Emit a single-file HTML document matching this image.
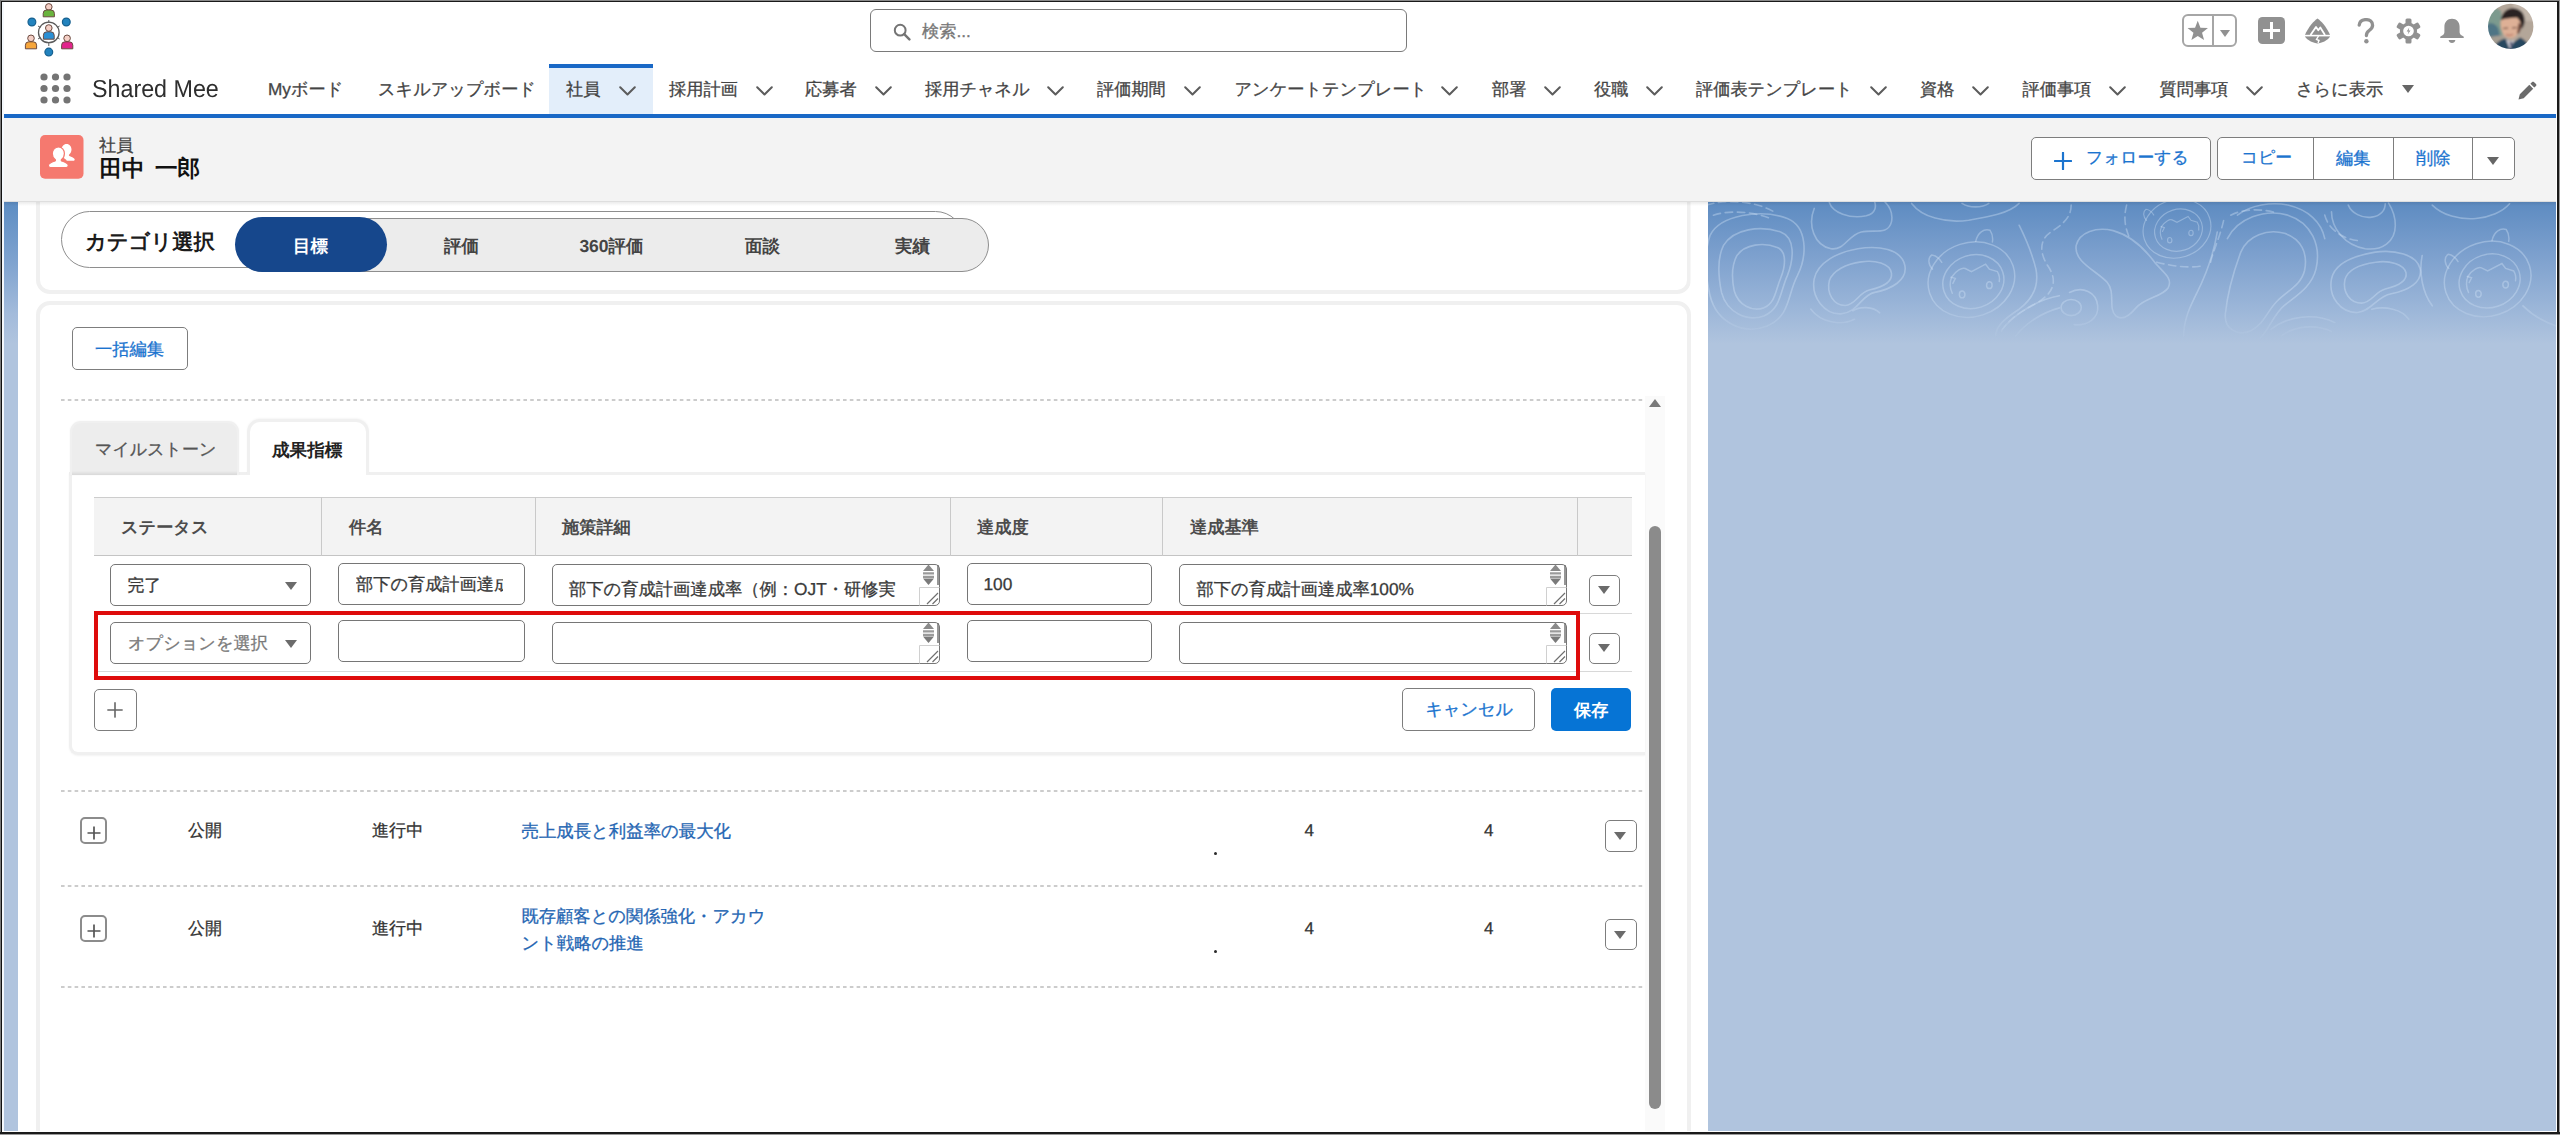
<!DOCTYPE html>
<html lang="ja">
<head>
<meta charset="utf-8">
<title>田中 一郎 | 社員</title>
<style>
*{box-sizing:border-box;margin:0;padding:0}
html,body{width:2560px;height:1135px;overflow:hidden;background:#fff}
body{font-family:"Liberation Sans",sans-serif;position:relative;color:#444;font-size:17.2px;text-rendering:geometricPrecision}
.a{position:absolute}
.t{position:absolute;white-space:nowrap;line-height:24px;height:24px;font-size:17.2px;color:#444;-webkit-text-stroke:.3px currentColor}
.b{font-weight:bold;-webkit-text-stroke:0}
.blue{color:#1b74cf}
.link{color:#2566b3}
.btn{position:absolute;background:#fff;border:1px solid #7d7d7d;border-radius:5px}
.inp{position:absolute;background:#fff;border:1px solid #767676;border-radius:5px}
.chev{position:absolute;width:17px;height:10px;top:85.5px}
.dash{position:absolute;height:2px;left:61px;width:1583px;background:repeating-linear-gradient(90deg,#c9c9c9 0,#c9c9c9 3.6px,rgba(255,255,255,0) 3.6px,rgba(255,255,255,0) 6.8px)}
.vline{position:absolute;width:1px;background:#c9c9c9}
.hline{position:absolute;height:1px;background:#d8d8d8}
.caret{position:absolute;width:0;height:0;border-left:6.5px solid transparent;border-right:6.5px solid transparent;border-top:8px solid #6b6b6b}
</style>
</head>
<body>

<!-- ===== GLOBAL HEADER ===== -->
<div class="a" id="hdr" style="left:0;top:0;width:2560px;height:114px;background:#fff">
<!-- app logo -->
<svg class="a" style="left:24px;top:2px" width="52" height="56" viewBox="24 2 52 56">
  <g stroke="#5a5a5a" stroke-width="1" fill="none">
    <circle cx="48.8" cy="32.4" r="10.3" stroke-width="1.3"/>
    <path d="M48.8 20v3M48.8 42v4M38 26l2.4 1.5M59.6 26l-2.4 1.5M38 39l2.4-1.5M59.6 39l-2.4-1.5"/>
  </g>
  <g stroke="#17608f" stroke-width="1.2" fill="#2283be">
    <circle cx="31.9" cy="22" r="3.9"/><circle cx="66.3" cy="22" r="3.9"/><circle cx="48.8" cy="52.1" r="3.9"/>
  </g>
  <g stroke="#6b4a40" stroke-width="1">
    <circle cx="48.8" cy="6.9" r="3.3" fill="#f4cfc6"/>
    <path d="M43.2 16.8v-3.4q0-3.4 3.4-3.4h4.4q3.4 0 3.4 3.4v3.4z" fill="#6ab43e"/>
    <circle cx="48.8" cy="28" r="3.3" fill="#f4cfc6"/>
    <path d="M43.4 39.2v-4q0-3.4 3.4-3.4h4q3.4 0 3.4 3.4v4z" fill="#2a8fd4"/>
    <circle cx="31" cy="38.3" r="3.3" fill="#f4cfc6"/>
    <path d="M25.4 48.8v-3.6q0-3.4 3.4-3.4h4.4q3.4 0 3.4 3.4v3.6z" fill="#f6a63c"/>
    <circle cx="67.1" cy="38.3" r="3.3" fill="#f4cfc6"/>
    <path d="M61.6 48.8v-3.6q0-3.4 3.4-3.4h4.4q3.4 0 3.4 3.4v3.6z" fill="#e2248c"/>
  </g>
</svg>
<!-- search -->
<div class="a" style="left:870px;top:9px;width:537px;height:43px;border:1px solid #7a7a7a;border-radius:6px;background:#fff"></div>
<svg class="a" style="left:893px;top:23px" width="18" height="18" viewBox="0 0 18 18"><circle cx="7.2" cy="7.2" r="5.4" fill="none" stroke="#747474" stroke-width="2"/><path d="M11.2 11.2l5.2 5.2" stroke="#747474" stroke-width="2.4" stroke-linecap="round"/></svg>
<div class="t" style="left:922px;top:19px;color:#777">検索...</div>
<!-- favorites -->
<div class="a" style="left:2182px;top:14px;width:55px;height:33px;border:2px solid #a6a6a6;border-radius:6px;background:#fff"></div>
<div class="a" style="left:2212px;top:15px;width:2px;height:31px;background:#a6a6a6"></div>
<svg class="a" style="left:2186.500px;top:20px" width="21.500" height="21.500" viewBox="0 0 20 20"><path d="M10 0.6l2.5 6.6 7 .3-5.5 4.4 1.9 6.8L10 14.8l-5.9 3.9L6 11.9.5 7.5l7-.3z" fill="#919191"/></svg>
<div class="caret" style="left:2219.5px;top:29.5px;border-left-width:5.5px;border-right-width:5.5px;border-top:7.5px solid #919191"></div>
<!-- plus box -->
<svg class="a" style="left:2258px;top:17px" width="27" height="27" viewBox="0 0 27 27"><rect x="0" y="0" width="27" height="27" rx="4.5" fill="#919191"/><path d="M13.5 5v17M5 13.5h17" stroke="#fff" stroke-width="3"/></svg>
<!-- trailhead -->
<svg class="a" style="left:2304px;top:18px" width="27" height="26" viewBox="0 0 27 26"><path d="M13.5 0.5C17 3 22.5 8.5 26.3 17.5c-.6 3.3-6 7-12.800 8C7 24.500 1.300 20.800.7 17.500 4.500 8.500 10 3 13.500.5z" fill="#919191"/><path d="M0 17.600h27" stroke="#fff" stroke-width="1.6"/><path d="M6.500 17l5.500-8 2.300 3.200 2-2.700L21 17" fill="none" stroke="#fff" stroke-width="1.800" stroke-linejoin="round"/><path d="M14.500 18l-2 3.500 2.500 1-1 2.500" fill="none" stroke="#fff" stroke-width="1.400"/></svg>
<!-- help -->
<svg class="a" style="left:2357px;top:18px" width="18" height="26" viewBox="0 0 18 26"><path d="M2.200 7.200C2.600 3.400 5.400 1.600 9 1.600c3.800 0 6.600 2.200 6.600 5.600 0 2.600-1.600 4-3.400 5.300C10.200 13.900 9.400 15 9.400 17.600" fill="none" stroke="#919191" stroke-width="3.300" stroke-linecap="round"/><circle cx="9.400" cy="23.200" r="2.200" fill="#919191"/></svg>
<!-- setup gear -->
<svg class="a" style="left:2396px;top:17.500px" width="25" height="26" viewBox="-12.500 -13 25 26"><g fill="#919191"><circle r="8.600"/><g id="gt"><rect x="-3" y="-12.600" width="6" height="6" rx="1.500"/></g><use href="#gt" transform="rotate(60)"/><use href="#gt" transform="rotate(120)"/><use href="#gt" transform="rotate(180)"/><use href="#gt" transform="rotate(240)"/><use href="#gt" transform="rotate(300)"/></g><circle r="5.300" fill="#fff"/><path d="M.8-3.400l-2.600 3.800h1.900l-.9 3 2.800-4h-1.900z" fill="#919191"/></svg>
<!-- bell -->
<svg class="a" style="left:2439px;top:17.500px" width="26" height="26" viewBox="0 0 26 26"><path d="M13 .8c4.600 0 7.600 3.400 7.600 8v5.400c0 2 1.600 3.300 3.600 4 .9.300.9 1.900-.2 1.900H2c-1.100 0-1.100-1.600-.2-1.900 2-.7 3.600-2 3.600-4V8.800c0-4.600 3-8 7.600-8z" fill="#919191"/><path d="M9.600 22h6.800c-.3 1.800-1.700 3-3.400 3s-3.100-1.200-3.400-3z" fill="#919191"/></svg>
<!-- avatar -->
<svg class="a" style="left:2487px;top:3px" width="48" height="48" viewBox="0 0 48 48"><defs><clipPath id="avc"><circle cx="23.700" cy="23.400" r="22.700"/></clipPath><filter id="avb" x="-10%" y="-10%" width="120%" height="120%"><feGaussianBlur stdDeviation="1.100"/></filter></defs><g clip-path="url(#avc)"><g filter="url(#avb)"><rect x="-4" y="-4" width="56" height="56" fill="#b3a699"/><rect x="26" y="-4" width="26" height="22" fill="#c2b6aa"/><path d="M-4 6c6-2 14-2 18 2l2 30-20 4z" fill="#7b9a8e"/><path d="M-2 22c5-3 10-2 13 3l3 12-16 3z" fill="#4f7485"/><path d="M2 34l14-2 2 8-14 4z" fill="#a49d92"/><path d="M13.500 22c-.5-8 4-13.500 10.500-13.500 7 0 10 6 9.500 13-.4 6-3.500 13.500-9.500 13.500-6.500 0-10-6-10.500-13z" fill="#deb096"/><path d="M14 17c1-8 7-12.500 14-11.500 7 1 10.500 7 9.500 14-.5 3-1.500 5-3 6.500 0-5-1.500-9-4.500-11.500-5 .5-11 .5-16 2.500z" fill="#2a2223"/><path d="M31.500 20c2 0 3 2 2.500 5s-2 6-4 6z" fill="#6a4538"/><path d="M16 25.500l5-.5M25 25l5-.5" stroke="#5a3a30" stroke-width="1"/><path d="M19 31.500c2 1 5 1 7-.3" stroke="#b77565" stroke-width="1.200" fill="none"/><path d="M6 48c1-7 6-10.500 12-12.500l7 5 8-6c5 2 9 6 10 13.500z" fill="#25465f"/><path d="M19 36.500l4 10 4.500-9.500-4 1.500z" fill="#cfcfd8"/><path d="M22.500 39l1.500 8 1.500-8z" fill="#4a4a6a"/></g></g></svg>
</div>

<!-- ===== NAV BAR ===== -->
<div class="a" style="left:549px;top:64px;width:104px;height:50px;background:#e3eefa;border-top:4px solid #1968c6"></div>
<svg class="a" style="left:40px;top:73px" width="31" height="31" viewBox="0 0 31 31"><g fill="#747474"><circle cx="4" cy="4" r="3.600"/><circle cx="15.500" cy="4" r="3.600"/><circle cx="27" cy="4" r="3.600"/><circle cx="4" cy="15.500" r="3.600"/><circle cx="15.500" cy="15.500" r="3.600"/><circle cx="27" cy="15.500" r="3.600"/><circle cx="4" cy="27" r="3.600"/><circle cx="15.500" cy="27" r="3.600"/><circle cx="27" cy="27" r="3.600"/></g></svg>
<div class="t" style="left:92px;top:74px;height:32px;line-height:32px;font-size:24.500px;color:#2e2e2e;-webkit-text-stroke:0;transform:scaleX(.95);transform-origin:0 50%">Shared Mee</div>
<div class="t" style="left:268px;top:77px">Myボード</div>
<div class="t" style="left:378px;top:77px">スキルアップボード</div>
<div class="t" style="left:566px;top:77px">社員</div><svg class="chev" style="left:619px" viewBox="0 0 17 10"><path d="M1.200 1.200l7.300 7.300 7.300-7.300" fill="none" stroke="#5c5c5c" stroke-width="2" stroke-linecap="round" stroke-linejoin="round"/></svg>
<div class="t" style="left:669px;top:77px">採用計画</div><svg class="chev" style="left:755.5px" viewBox="0 0 17 10"><path d="M1.200 1.200l7.300 7.300 7.300-7.300" fill="none" stroke="#5c5c5c" stroke-width="2" stroke-linecap="round" stroke-linejoin="round"/></svg>
<div class="t" style="left:805px;top:77px">応募者</div><svg class="chev" style="left:874.5px" viewBox="0 0 17 10"><path d="M1.200 1.200l7.300 7.300 7.300-7.300" fill="none" stroke="#5c5c5c" stroke-width="2" stroke-linecap="round" stroke-linejoin="round"/></svg>
<div class="t" style="left:925px;top:77px">採用チャネル</div><svg class="chev" style="left:1047px" viewBox="0 0 17 10"><path d="M1.200 1.200l7.300 7.300 7.300-7.300" fill="none" stroke="#5c5c5c" stroke-width="2" stroke-linecap="round" stroke-linejoin="round"/></svg>
<div class="t" style="left:1097px;top:77px">評価期間</div><svg class="chev" style="left:1184px" viewBox="0 0 17 10"><path d="M1.200 1.200l7.300 7.300 7.300-7.300" fill="none" stroke="#5c5c5c" stroke-width="2" stroke-linecap="round" stroke-linejoin="round"/></svg>
<div class="t" style="left:1234.5px;top:77px">アンケートテンプレート</div><svg class="chev" style="left:1441px" viewBox="0 0 17 10"><path d="M1.200 1.200l7.300 7.300 7.300-7.300" fill="none" stroke="#5c5c5c" stroke-width="2" stroke-linecap="round" stroke-linejoin="round"/></svg>
<div class="t" style="left:1492px;top:77px">部署</div><svg class="chev" style="left:1544px" viewBox="0 0 17 10"><path d="M1.200 1.200l7.300 7.300 7.300-7.300" fill="none" stroke="#5c5c5c" stroke-width="2" stroke-linecap="round" stroke-linejoin="round"/></svg>
<div class="t" style="left:1594px;top:77px">役職</div><svg class="chev" style="left:1646px" viewBox="0 0 17 10"><path d="M1.200 1.200l7.300 7.300 7.300-7.300" fill="none" stroke="#5c5c5c" stroke-width="2" stroke-linecap="round" stroke-linejoin="round"/></svg>
<div class="t" style="left:1696px;top:77px">評価表テンプレート</div><svg class="chev" style="left:1870px" viewBox="0 0 17 10"><path d="M1.200 1.200l7.300 7.300 7.300-7.300" fill="none" stroke="#5c5c5c" stroke-width="2" stroke-linecap="round" stroke-linejoin="round"/></svg>
<div class="t" style="left:1920px;top:77px">資格</div><svg class="chev" style="left:1972px" viewBox="0 0 17 10"><path d="M1.200 1.200l7.300 7.300 7.300-7.300" fill="none" stroke="#5c5c5c" stroke-width="2" stroke-linecap="round" stroke-linejoin="round"/></svg>
<div class="t" style="left:2022.5px;top:77px">評価事項</div><svg class="chev" style="left:2109px" viewBox="0 0 17 10"><path d="M1.200 1.200l7.300 7.300 7.300-7.300" fill="none" stroke="#5c5c5c" stroke-width="2" stroke-linecap="round" stroke-linejoin="round"/></svg>
<div class="t" style="left:2159.5px;top:77px">質問事項</div><svg class="chev" style="left:2246px" viewBox="0 0 17 10"><path d="M1.200 1.200l7.300 7.300 7.300-7.300" fill="none" stroke="#5c5c5c" stroke-width="2" stroke-linecap="round" stroke-linejoin="round"/></svg>
<div class="t" style="left:2296px;top:77px">さらに表示</div>
<div class="caret" style="left:2402px;top:85px;border-top-color:#666"></div>
<svg class="a" style="left:2517px;top:81px" width="20" height="20" viewBox="0 0 20 20"><path d="M1.500 18.500l1.300-5.200 9.500-9.500 3.900 3.900-9.500 9.500zM13.400 2.700l1.700-1.700c.5-.5 1.300-.5 1.800 0l2.100 2.100c.5.500.5 1.300 0 1.800l-1.700 1.700z" fill="#6b6b6b"/></svg>
<div class="a" id="navline" style="left:3px;top:114px;width:2554px;height:4px;background:#1968c6"></div>

<!-- ===== RECORD HEADER ===== -->
<div class="a" id="rechdr" style="left:2px;top:118px;width:2555px;height:83px;background:#f3f3f3"></div>
<svg class="a" style="left:40px;top:135px" width="44" height="44" viewBox="0 0 44 44"><rect width="43.500" height="43.800" rx="5" fill="#f5796f"/><g fill="#fff"><path d="M22.800 19.500c-.9-1.300-1.200-3-1.200-4.600 0-3.300 2-5.900 5-5.900s4.900 2.600 4.900 5.600c0 2.300-1 4-2.300 5-.4.400-.4 1 .1 1.300 2 .8 5.400 1.800 5.400 3.600 0 .9-.6 1.300-1.400 1.300h-6.500c-.6-1.500-2.300-2.500-4-3.300z"/><path d="M18.500 12c3.400 0 5.900 2.800 5.900 6.500 0 2.700-1.200 4.700-2.800 5.900-.5.400-.5 1.200.1 1.500 2.500 1 6.600 2.200 6.600 4.600 0 1.200-.8 2-2 2H10.400c-1.200 0-2-.8-2-2 0-2.400 4.100-3.600 6.600-4.600.6-.3.600-1.100.1-1.500-1.600-1.200-2.800-3.200-2.800-5.900 0-3.700 2.700-6.500 6.200-6.500z" stroke="#f5796f" stroke-width="1.200"/></g></svg>
<div class="t" style="left:99px;top:133px">社員</div>
<div class="t b" style="left:99.500px;top:154px;height:30px;line-height:30px;font-size:22.600px;color:#111;word-spacing:4px">田中 一郎</div>
<!-- follow button -->
<div class="btn" style="left:2031px;top:137px;width:180px;height:42.500px"></div>
<svg class="a" style="left:2054px;top:152px" width="18" height="18" viewBox="0 0 18 18"><path d="M9 .8v16.400M.8 9h16.400" stroke="#1b74cf" stroke-width="2.200" stroke-linecap="round"/></svg>
<div class="t blue" style="left:2086px;top:146px;font-size:16.800px">フォローする</div>
<!-- button group -->
<div class="btn" style="left:2217px;top:137px;width:298px;height:42.500px"></div>
<div class="vline" style="left:2313px;top:138px;height:41px;background:#7d7d7d"></div>
<div class="vline" style="left:2393px;top:138px;height:41px;background:#7d7d7d"></div>
<div class="vline" style="left:2472px;top:138px;height:41px;background:#7d7d7d"></div>
<div class="t blue" style="left:2241px;top:146px;font-size:16.800px">コピー</div>
<div class="t blue" style="left:2336px;top:146px;font-size:17.200px">編集</div>
<div class="t blue" style="left:2416px;top:146px;font-size:17.200px">削除</div>
<div class="caret" style="left:2486.500px;top:156.500px;border-top-color:#666"></div>

<!-- ===== MAIN ===== -->
<div class="a" id="main" style="left:2px;top:201px;width:2555px;height:932px;background:#fff"></div>
<!-- left blue strip -->
<div class="a" style="left:4px;top:202px;width:13.500px;height:930px;background:linear-gradient(#5d8dc3 0,#7fa3cf 60px,#a3bbdb 112px,#b0c4de 142px,#b0c4de 100%)"></div>
<!-- right sidebar -->
<div class="a" id="side" style="left:1708px;top:202px;width:848px;height:930px;background:linear-gradient(#5d8bc1 0,#7b9fcd 50px,#9ab5d8 104px,#b0c4de 142px,#b0c4de 100%);overflow:hidden">
<svg class="a" style="left:0;top:0" width="848" height="150" viewBox="0 0 848 150">
<defs><linearGradient id="fd" x1="0" y1="0" x2="0" y2="1"><stop offset="0" stop-color="#fff" stop-opacity=".9"/><stop offset=".65" stop-color="#fff" stop-opacity=".9"/><stop offset=".95" stop-color="#fff" stop-opacity="0"/></linearGradient><mask id="fm"><rect width="848" height="150" fill="url(#fd)"/></mask></defs>
<g mask="url(#fm)"><g transform="translate(-8,-7) scale(.3359)" fill="none" stroke="#d4e4f7" stroke-opacity=".42" stroke-width="4.800" stroke-linecap="round">
<!-- blob A (left) -->
<path d="M30 120C60 60 180 40 260 70c60 24 60 110 30 170-30 56-20 120-90 150-70 28-150-10-170-90-14-60-20-120 0-180z"/>
<path d="M70 150c30-50 110-60 170-40 44 16 40 80 20 130-22 50-20 100-70 120-50 18-110-10-126-70-10-50-14-100 6-140z"/>
<path d="M110 180c24-34 80-40 120-24 30 12 24 58 10 92-16 38-16 74-50 88-36 12-76-8-88-50-8-38-8-76 8-106z"/>
<path d="M20 30c60-20 150-10 200 20M40 60c50-16 120-10 170 10" stroke-dasharray="22 14"/>
<!-- blob B -->
<path d="M340 250c10-50 70-80 130-90 60-10 130 0 140 50 8 44-40 70-90 80-40 8-50 60-100 64-50 2-90-50-80-104z"/>
<path d="M385 255c10-30 50-50 95-56 40-6 86 4 90 34 4 28-30 42-66 50-32 8-40 44-72 46-34 0-56-36-47-74z"/>
<path d="M330 340c30 40 90 50 130 30M455 345c20-14 60-14 80 6"/>
<!-- top shapes -->
<path d="M385 22c10 30 60 50 110 40 30-8 30-30 24-44M340 40c-20 50 0 110 50 120 40 6 50-40 90-50 40-8 80 10 90-30 6-30-10-50-20-60"/>
<path d="M630 25c30 40 100 60 170 50 60-10 120-20 150-50M780 25c20 14 60 14 80 0"/>
<path d="M950 90c20 40 40 90 50 130 10 50-10 90-50 120-40 26-70 50-70 80"/>
<!-- dashed trail -->
<path d="M1105 30c0 40-30 60-60 80-40 26-30 70-10 100 30 44 20 80-30 110-50 28-90 50-110 90" stroke-dasharray="22 14"/>
<path d="M1270 30c-10 40-4 70 10 100M1360 200c40 10 90 20 140 10M1520 200c10-40 30-80 40-130" stroke-dasharray="22 14"/>
<!-- boot blob -->
<path d="M1120 150c10-40 60-56 110-44 50 14 90 50 120 90 24 32 60 50 44 80-16 26-70 30-96 60-20 24-40 40-60 24-24-22 0-70-26-100-30-34-100-60-92-110z"/>
<path d="M1100 290c40-20 80 0 84 40 4 36-30 60-70 56M1075 335a30 24 0 1 0 60 0a30 24 0 1 0-60 0"/>
<path d="M900 400c40-50 110-90 170-100M940 420c30-40 80-70 130-84"/>
<!-- tall shape -->
<path d="M1610 170c20-50 80-70 130-56 50 16 70 60 60 110-10 44-50 60-80 90-30 28-40 70-80 90-40 18-80-6-76-50 6-60 26-130 46-184z"/>
<path d="M1570 130c30-60 110-90 180-70 70 22 100 90 84 160-14 56-60 80-96 110-30 26-44 70-70 96"/>
<path d="M1540 110c-10 60-30 120-60 180-20 40-40 80-40 130M1600 60c40-30 100-40 150-30 60 14 100 50 110 100"/>
<path d="M1580 60c40-20 90-20 140-6M1860 60c10 40 50 70 100 76" stroke-dasharray="22 14"/>
<!-- blob D -->
<path d="M1880 250c10-50 70-70 130-80 56-8 124 6 134 50 8 40-36 64-86 74-44 8-56 50-100 56-50 2-88-46-78-100z"/>
<path d="M1920 252c8-30 48-46 92-52 40-6 84 6 90 32 4 26-28 40-62 48-30 8-40 40-70 42-34 0-58-32-50-70z"/>
<path d="M1880 50c0 50 40 100 100 110 50 6 90-20 90-70 0-30-10-50-20-66M1930 30c10 24 40 40 70 36 26-4 40-20 40-40"/>
<path d="M1700 400c50-40 130-50 190-20M1730 420c40-30 100-36 150-14M2000 340c40-10 90 0 110 30"/>
<path d="M2180 30c30 30 80 44 130 40 40-4 80-20 100-44M2150 180c-10 50 0 110 30 150M2450 330c30 30 70 50 100 60" />
<g transform="translate(808,252) scale(0.92)">
<ellipse rx="142" ry="120" transform="rotate(-18)"/>
<ellipse cx="4" cy="8" rx="100" ry="86" transform="rotate(-18)"/>
<path d="M-62 44c-8-18-8-38-2-52 14-22 34-32 44-28l20 10 46-24 12 16 26 8c6 10 8 22 6 32"/>
<path d="M-66-8l14 4-8 16"/>
<path d="M14-124c6-28 26-42 46-36 8 12 10 26 8 38M-126-34c-14-14-16-36-2-46 14 2 24 10 32 24"/>
<ellipse cx="-30" cy="48" rx="9" ry="11"/><ellipse cx="58" cy="18" rx="9" ry="11"/>
</g><g transform="translate(1420,100) scale(0.72)">
<ellipse rx="142" ry="120" transform="rotate(-18)"/>
<ellipse cx="4" cy="8" rx="100" ry="86" transform="rotate(-18)"/>
<path d="M-62 44c-8-18-8-38-2-52 14-22 34-32 44-28l20 10 46-24 12 16 26 8c6 10 8 22 6 32"/>
<path d="M-66-8l14 4-8 16"/>
<path d="M14-124c6-28 26-42 46-36 8 12 10 26 8 38M-126-34c-14-14-16-36-2-46 14 2 24 10 32 24"/>
<ellipse cx="-30" cy="48" rx="9" ry="11"/><ellipse cx="58" cy="18" rx="9" ry="11"/>
</g><g transform="translate(2345,250) scale(0.92)">
<ellipse rx="142" ry="120" transform="rotate(-18)"/>
<ellipse cx="4" cy="8" rx="100" ry="86" transform="rotate(-18)"/>
<path d="M-62 44c-8-18-8-38-2-52 14-22 34-32 44-28l20 10 46-24 12 16 26 8c6 10 8 22 6 32"/>
<path d="M-66-8l14 4-8 16"/>
<path d="M14-124c6-28 26-42 46-36 8 12 10 26 8 38M-126-34c-14-14-16-36-2-46 14 2 24 10 32 24"/>
<ellipse cx="-30" cy="48" rx="9" ry="11"/><ellipse cx="58" cy="18" rx="9" ry="11"/>
</g>
</g></g></svg>
</div>
<!-- card 1 -->
<div class="a" style="left:36px;top:180px;width:1654.500px;height:114px;border:4px solid #f0f0f0;border-radius:14px;background:#fff;clip-path:inset(22px 0 0 0)"></div>
<!-- card 2 -->
<div class="a" style="left:36px;top:301px;width:1654.500px;height:900px;border:4px solid #f0f0f0;border-radius:14px;background:#fff"></div>

<!-- category pills -->
<div class="a" style="left:61px;top:210.500px;width:903px;height:57.500px;border:1px solid #8e8e8e;border-radius:29px;background:#fff"></div>
<div class="a" style="left:236px;top:217.500px;width:753px;height:54px;border:1px solid #8e8e8e;border-radius:27px;background:#ececec"></div>
<div class="a" style="left:235px;top:217px;width:151.500px;height:55px;border-radius:27.500px;background:#16478c"></div>
<div class="t b" style="left:85px;top:227px;height:30px;line-height:30px;font-size:21.300px;color:#1c1c1c">カテゴリ選択</div>
<div class="t b" style="left:235px;width:151px;text-align:center;top:233.500px;font-size:17.500px;color:#fff">目標</div>
<div class="t b" style="left:386px;width:151px;text-align:center;top:233.500px;font-size:17.500px">評価</div>
<div class="t b" style="left:536px;width:151px;text-align:center;top:233.500px;font-size:17.500px">360評価</div>
<div class="t b" style="left:687px;width:151px;text-align:center;top:233.500px;font-size:17.500px">面談</div>
<div class="t b" style="left:837px;width:151px;text-align:center;top:233.500px;font-size:17.500px">実績</div>

<!-- bulk edit -->
<div class="btn" style="left:72px;top:327px;width:116px;height:43px"></div>
<div class="t blue" style="left:95px;top:337px;font-size:17.300px">一括編集</div>

<svg class="a" style="left:61px;top:398.0px" width="1583" height="4" viewBox="0 0 1583 4"><path d="M0 2H1583" stroke="#bcbcbc" stroke-width="1.500" stroke-dasharray="3.600 3.200"/></svg>
<!-- scroll -->
<div class="a" style="left:1645px;top:396px;width:20px;height:736px;background:#fafafa"></div>
<div class="a" style="left:1649px;top:399px;width:0;height:0;border-left:6px solid transparent;border-right:6px solid transparent;border-bottom:8px solid #7a7a7a"></div>
<div class="a" style="left:1648.500px;top:526px;width:12px;height:583px;border-radius:6px;background:#8b8b8b"></div>

<!-- tab panel -->
<div class="a" style="left:69px;top:472px;width:1576px;height:283px;background:#fff;border:3px solid #f0f0f0;border-right:none;border-radius:0 0 0 9px;box-shadow:0 1px 2px rgba(0,0,0,.05)"></div>
<!-- tab 1 -->
<div class="a" style="left:70px;top:421px;width:169px;height:53.500px;background:#ededed;border:2px solid #f0f0f0;border-bottom:none;border-radius:11px 11px 0 0;box-shadow:inset 0 -4px 3px -2px rgba(0,0,0,.09),0 0 2px rgba(0,0,0,.06)"></div>
<div class="t" style="left:95px;top:438px;font-size:17px;color:#555">マイルストーン</div>
<!-- tab 2 -->
<div class="a" style="left:246.500px;top:419px;width:122px;height:56px;background:#fff;border:3px solid #f0f0f0;border-bottom:none;border-radius:13px 13px 0 0;box-shadow:0 -1px 2px rgba(0,0,0,.04)"></div>
<div class="a" style="left:249.500px;top:471px;width:116px;height:5px;background:#fff"></div>
<div class="t b" style="left:272px;top:438px;font-size:17.600px;color:#222">成果指標</div>
<!-- table header -->
<div class="a" style="left:94px;top:497px;width:1537.500px;height:59px;background:#f3f3f3;border-top:1.500px solid #cdcdcd;border-bottom:1px solid #c4c4c4"></div>
<div class="vline" style="left:321px;top:497px;height:59px"></div>
<div class="vline" style="left:534.500px;top:497px;height:59px"></div>
<div class="vline" style="left:949.500px;top:497px;height:59px"></div>
<div class="vline" style="left:1161.500px;top:497px;height:59px"></div>
<div class="vline" style="left:1576.500px;top:497px;height:59px"></div>
<div class="t b" style="left:121px;top:514.500px;color:#4c4c4c">ステータス</div>
<div class="t b" style="left:349px;top:514.500px;color:#4c4c4c">件名</div>
<div class="t b" style="left:562px;top:514.500px;color:#4c4c4c">施策詳細</div>
<div class="t b" style="left:977px;top:514.500px;color:#4c4c4c">達成度</div>
<div class="t b" style="left:1190px;top:514.500px;color:#4c4c4c">達成基準</div>
<div class="hline" style="left:94px;top:613px;width:1537.500px"></div>
<div class="hline" style="left:94px;top:671px;width:1537.500px"></div>
<!-- row 1 -->
<div class="inp" style="left:110px;top:564px;width:201px;height:42px"></div>
<div class="t" style="left:127.500px;top:573.500px;font-size:16.800px;color:#3a3a3a">完了</div>
<div class="caret" style="left:284.500px;top:582px"></div>
<div class="inp" style="left:338px;top:562.500px;width:186.500px;height:42px;overflow:hidden"><div class="t" style="left:17px;top:8px;font-size:17.200px;color:#3a3a3a;width:146.500px;overflow:hidden">部下の育成計画達成率</div></div>
<div class="inp" style="left:551.5px;top:564px;width:388px;height:42px"></div>
<svg class="a" style="left:917.5px;top:564px" width="22" height="42" viewBox="0 0 22 42"><path d="M10.500 0v22" stroke="#fff" stroke-width="0"/><path d="M5 7l5.500-6.500L16 7z" fill="#8a8a8a"/><path d="M5 8.300h11v2.200H5zM5 11.800h11v2.200H5z" fill="#9a9a9a"/><path d="M5 14.500l5.500 6.500 5.500-6.500z" fill="#7a7a7a"/><path d="M20 1v20" stroke="#6a6a6a" stroke-width="1.400"/><path d="M1.500 41.500V23.500H21.500" fill="none" stroke="#d0d0d0" stroke-width="1"/><path d="M9 40l11-11M14.500 40l5.500-5.500" stroke="#6f6f6f" stroke-width="1.200"/></svg>
<div class="t" style="left:569.0px;top:576.5px;font-size:17.300px;color:#3a3a3a">部下の育成計画達成率（例：OJT・研修実</div>
<div class="inp" style="left:966.500px;top:562.500px;width:185px;height:42px"></div>
<div class="t" style="left:983.500px;top:571.500px;font-size:17.300px;color:#3a3a3a">100</div>
<div class="inp" style="left:1179px;top:564px;width:387.5px;height:42px"></div>
<svg class="a" style="left:1544.5px;top:564px" width="22" height="42" viewBox="0 0 22 42"><path d="M10.500 0v22" stroke="#fff" stroke-width="0"/><path d="M5 7l5.500-6.500L16 7z" fill="#8a8a8a"/><path d="M5 8.300h11v2.200H5zM5 11.800h11v2.200H5z" fill="#9a9a9a"/><path d="M5 14.500l5.500 6.500 5.500-6.500z" fill="#7a7a7a"/><path d="M20 1v20" stroke="#6a6a6a" stroke-width="1.400"/><path d="M1.500 41.500V23.500H21.500" fill="none" stroke="#d0d0d0" stroke-width="1"/><path d="M9 40l11-11M14.500 40l5.500-5.500" stroke="#6f6f6f" stroke-width="1.200"/></svg>
<div class="t" style="left:1196.5px;top:576.5px;font-size:17.300px;color:#3a3a3a">部下の育成計画達成率100%</div>
<div class="btn" style="left:1588.500px;top:574.500px;width:31.500px;height:31.500px"></div>
<div class="caret" style="left:1597.500px;top:586px"></div>
<!-- row 2 -->
<div class="inp" style="left:110px;top:621.500px;width:201px;height:42px"></div>
<div class="t" style="left:128px;top:631px;font-size:17.200px;color:#7a7a7a">オプションを選択</div>
<div class="caret" style="left:284.500px;top:639.500px"></div>
<div class="inp" style="left:338px;top:620px;width:186.500px;height:42px"></div>
<div class="inp" style="left:551.5px;top:621.5px;width:388px;height:42px"></div>
<svg class="a" style="left:917.5px;top:621.5px" width="22" height="42" viewBox="0 0 22 42"><path d="M10.500 0v22" stroke="#fff" stroke-width="0"/><path d="M5 7l5.500-6.500L16 7z" fill="#8a8a8a"/><path d="M5 8.300h11v2.200H5zM5 11.800h11v2.200H5z" fill="#9a9a9a"/><path d="M5 14.500l5.500 6.500 5.500-6.500z" fill="#7a7a7a"/><path d="M20 1v20" stroke="#6a6a6a" stroke-width="1.400"/><path d="M1.500 41.500V23.500H21.500" fill="none" stroke="#d0d0d0" stroke-width="1"/><path d="M9 40l11-11M14.500 40l5.500-5.500" stroke="#6f6f6f" stroke-width="1.200"/></svg>
<div class="inp" style="left:966.500px;top:620px;width:185px;height:42px"></div>
<div class="inp" style="left:1179px;top:621.5px;width:387.5px;height:42px"></div>
<svg class="a" style="left:1544.5px;top:621.5px" width="22" height="42" viewBox="0 0 22 42"><path d="M10.500 0v22" stroke="#fff" stroke-width="0"/><path d="M5 7l5.500-6.500L16 7z" fill="#8a8a8a"/><path d="M5 8.300h11v2.200H5zM5 11.800h11v2.200H5z" fill="#9a9a9a"/><path d="M5 14.500l5.500 6.500 5.500-6.500z" fill="#7a7a7a"/><path d="M20 1v20" stroke="#6a6a6a" stroke-width="1.400"/><path d="M1.500 41.500V23.500H21.500" fill="none" stroke="#d0d0d0" stroke-width="1"/><path d="M9 40l11-11M14.500 40l5.500-5.500" stroke="#6f6f6f" stroke-width="1.200"/></svg>
<div class="btn" style="left:1588.500px;top:632.500px;width:31.500px;height:31.500px"></div>
<div class="caret" style="left:1597.500px;top:644px"></div>
<!-- red highlight -->
<div class="a" style="left:94px;top:611px;width:1486px;height:69px;border:4px solid #de0b0b"></div>
<!-- add / cancel / save -->
<div class="btn" style="left:94px;top:689px;width:43px;height:42px"></div>
<svg class="a" style="left:107px;top:702px" width="16" height="16" viewBox="0 0 18 18"><path d="M9 1v16M1 9h16" stroke="#666" stroke-width="1.800" stroke-linecap="round"/></svg>
<div class="btn" style="left:1401.500px;top:688px;width:133px;height:43px"></div>
<div class="t blue" style="left:1425.500px;top:697.500px;font-size:17.100px">キャンセル</div>
<div class="a" style="left:1550.500px;top:688px;width:80.500px;height:43px;background:#0674d5;border-radius:5px"></div>
<div class="t b" style="left:1574px;top:697.500px;font-size:17.200px;color:#fff">保存</div>
<svg class="a" style="left:61px;top:789.0px" width="1583" height="4" viewBox="0 0 1583 4"><path d="M0 2H1583" stroke="#bcbcbc" stroke-width="1.500" stroke-dasharray="3.600 3.200"/></svg>
<svg class="a" style="left:61px;top:884.0px" width="1583" height="4" viewBox="0 0 1583 4"><path d="M0 2H1583" stroke="#bcbcbc" stroke-width="1.500" stroke-dasharray="3.600 3.200"/></svg>
<svg class="a" style="left:61px;top:985.0px" width="1583" height="4" viewBox="0 0 1583 4"><path d="M0 2H1583" stroke="#bcbcbc" stroke-width="1.500" stroke-dasharray="3.600 3.200"/></svg>
<div class="btn" style="left:80.0px;top:817.0px;width:27px;height:27px;border:2px solid #8c8c8c;border-radius:5px"></div><svg class="a" style="left:87.0px;top:825.5px" width="14" height="14" viewBox="0 0 14 14"><path d="M7 .5v13M.5 7h13" stroke="#555" stroke-width="1.700"/></svg>
<div class="t" style="left:188px;top:819px;font-size:17px;color:#333">公開</div>
<div class="t" style="left:372px;top:819px;font-size:17.100px;color:#333">進行中</div>
<div class="t link" style="left:521.500px;top:819px;font-size:17.400px">売上成長と利益率の最大化</div>
<div class="a" style="left:1214px;top:851.500px;width:3px;height:3px;border-radius:2px;background:#2a2a2a"></div>
<div class="t" style="left:1304.500px;top:819px;font-size:17px;color:#333">4</div>
<div class="t" style="left:1484px;top:819px;font-size:17px;color:#333">4</div>
<div class="btn" style="left:1604.500px;top:820px;width:32px;height:31.500px"></div>
<div class="caret" style="left:1614px;top:832px"></div>
<div class="btn" style="left:80.0px;top:915.0px;width:27px;height:27px;border:2px solid #8c8c8c;border-radius:5px"></div><svg class="a" style="left:87.0px;top:923.5px" width="14" height="14" viewBox="0 0 14 14"><path d="M7 .5v13M.5 7h13" stroke="#555" stroke-width="1.700"/></svg>
<div class="t" style="left:188px;top:917px;font-size:17px;color:#333">公開</div>
<div class="t" style="left:372px;top:917px;font-size:17.100px;color:#333">進行中</div>
<div class="t link" style="left:521.500px;top:903.500px;font-size:17.300px">既存顧客との関係強化・アカウ</div>
<div class="t link" style="left:521.500px;top:930.500px;font-size:17.300px">ント戦略の推進</div>
<div class="a" style="left:1214px;top:949.500px;width:3px;height:3px;border-radius:2px;background:#2a2a2a"></div>
<div class="t" style="left:1304.500px;top:917px;font-size:17px;color:#333">4</div>
<div class="t" style="left:1484px;top:917px;font-size:17px;color:#333">4</div>
<div class="btn" style="left:1604.500px;top:918.500px;width:32px;height:31.500px"></div>
<div class="caret" style="left:1614px;top:930.500px"></div>
<div class="a" style="left:2px;top:201px;width:2555px;height:5px;background:linear-gradient(rgba(0,0,0,.16),rgba(0,0,0,.07) 28%,rgba(0,0,0,0))"></div>

<!-- ===== FRAME ===== -->
<div class="a" id="frame" style="left:0;top:0;width:2560px;height:1135px;pointer-events:none;z-index:99">
<div class="a" style="left:0;top:0;width:2560px;height:1px;background:#8a8a8a"></div>
<div class="a" style="left:0;top:1px;width:2560px;height:1px;background:#1a1a1a"></div>
<div class="a" style="left:0;top:0;width:1px;height:1135px;background:#7a7a7a"></div>
<div class="a" style="left:1px;top:1px;width:1px;height:1133px;background:#111"></div>
<div class="a" style="left:2px;top:2px;width:2px;height:1130px;background:#f4f8fc"></div>
<div class="a" style="left:2556px;top:2px;width:1.500px;height:1130px;background:#fff"></div>
<div class="a" style="left:2557px;top:1px;width:2px;height:1133px;background:#1a1a1a"></div>
<div class="a" style="left:2559px;top:0;width:1px;height:1135px;background:#9a9a9a"></div>
<div class="a" style="left:2px;top:1130.500px;width:2555px;height:2px;background:#fff"></div>
<div class="a" style="left:0;top:1132px;width:2560px;height:2px;background:#1a1a1a"></div>
<div class="a" style="left:0;top:1134px;width:2560px;height:1px;background:#9a9a9a"></div>
</div>

</body>
</html>
